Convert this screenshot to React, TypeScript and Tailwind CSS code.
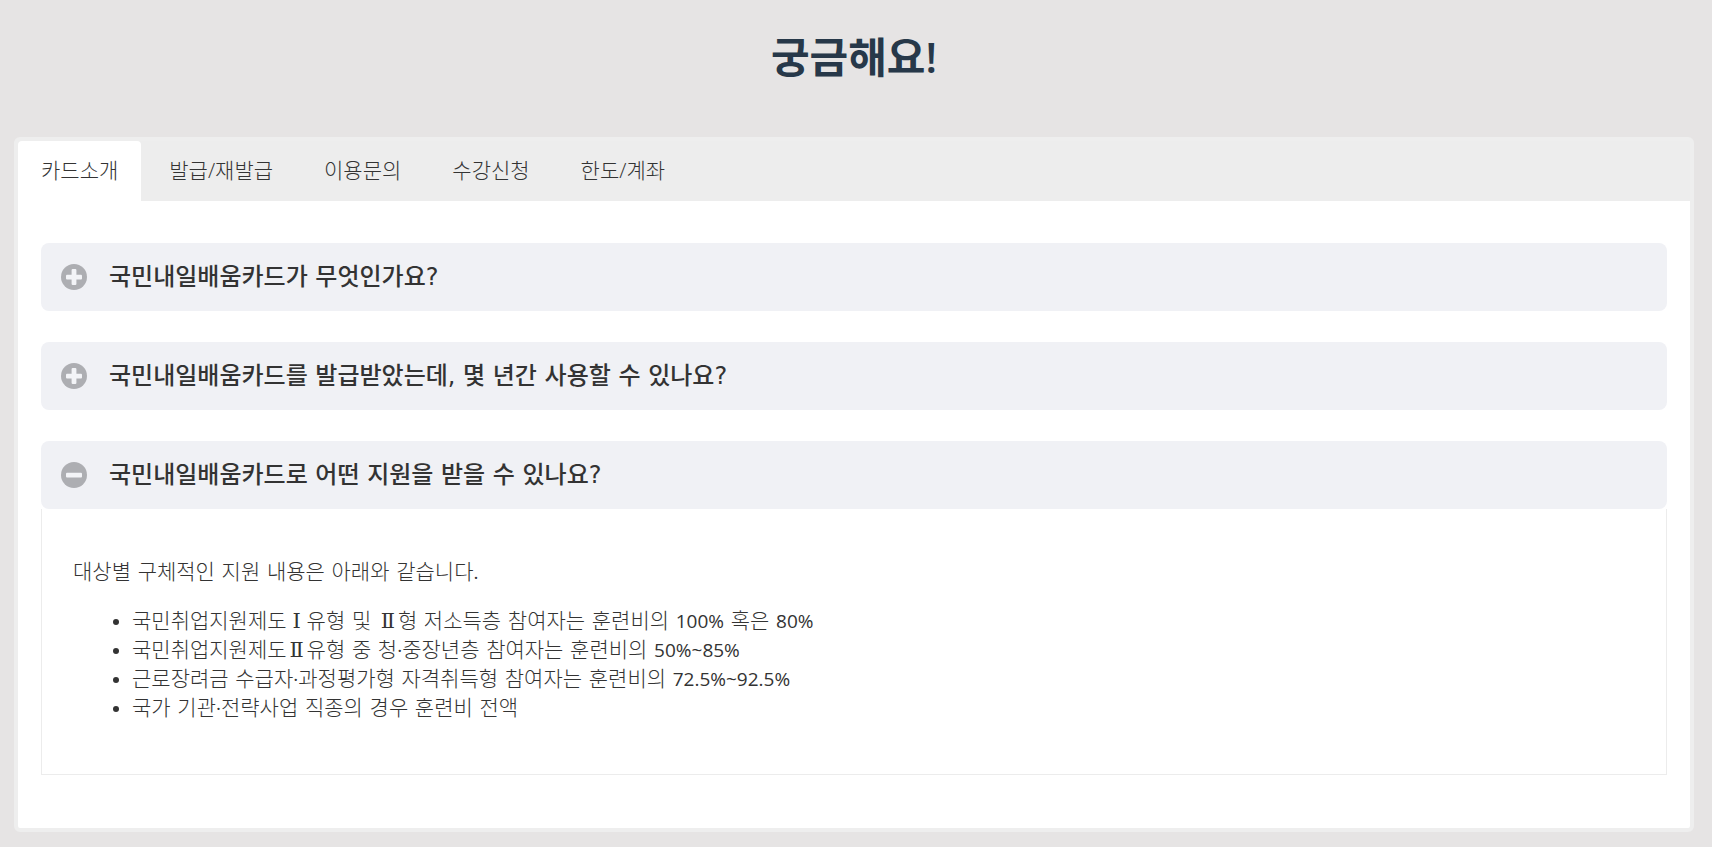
import { useState } from 'react';

const tabs = ['카드소개', '발급/재발급', '이용문의', '수강신청', '한도/계좌'];

const questions = [
  '국민내일배움카드가 무엇인가요?',
  '국민내일배움카드를 발급받았는데, 몇 년간 사용할 수 있나요?',
  '국민내일배움카드로 어떤 지원을 받을 수 있나요?',
];

function Num({ children }: { children: string }) {
  return <span className="font-['Open_Sans',sans-serif] text-[19px] leading-none font-normal">{children}</span>;
}

function Roman({ children }: { children: string }) {
  return (
    <span className="inline-block w-5 text-center font-['DejaVu_Serif',serif] text-[21px] leading-none font-normal">
      {children}
    </span>
  );
}

function ToggleIcon({ open }: { open: boolean }) {
  return (
    <svg className="size-[26px] shrink-0" viewBox="0 0 26 26" aria-hidden="true">
      <circle cx="13" cy="13" r="13" fill="#adaeb2" />
      <rect x="5" y="10.7" width="16" height="4.8" rx="1" fill="#f3f4f7" />
      {!open && <rect x="10.6" y="5.1" width="4.8" height="16" rx="1" fill="#f3f4f7" />}
    </svg>
  );
}

function SupportAnswer() {
  return (
    <div className="border border-t-0 border-[#ececec] px-[31px] pt-[49px] pb-[51px] font-['DejaVu_Sans','Noto_Sans_CJK_KR',sans-serif] text-[21px] leading-[29px] font-light">
      <p>
        대상별 구체적인 지원 내용은 아래와 같습니다<Num>.</Num>
      </p>
      <ul className="mt-5 list-disc pl-[59px]">
        <li>
          국민취업지원제도<Roman>Ⅰ</Roman>유형 및 <Roman>Ⅱ</Roman>형 저소득층 참여자는 훈련비의 <Num>100%</Num> 혹은{' '}
          <Num>80%</Num>
        </li>
        <li>
          국민취업지원제도<Roman>Ⅱ</Roman>유형 중 청<Num>·</Num>중장년층 참여자는 훈련비의 <Num>50%~85%</Num>
        </li>
        <li>
          근로장려금 수급자<Num>·</Num>과정평가형 자격취득형 참여자는 훈련비의 <Num>72.5%~92.5%</Num>
        </li>
        <li>
          국가 기관<Num>·</Num>전략사업 직종의 경우 훈련비 전액
        </li>
      </ul>
    </div>
  );
}

export default function App() {
  const [tab, setTab] = useState(0);
  const [open, setOpen] = useState(2);

  return (
    <main
      lang="ko"
      className="min-h-screen bg-[#e6e4e4] pt-[27px] pr-[18px] pb-[15px] pl-[14px] font-['Open_Sans','Noto_Sans_CJK_KR',sans-serif] text-[#333]"
    >
      <h1 className="text-center text-[42px] leading-[60px] font-semibold text-[#273849]">궁금해요!</h1>

      <section className="mt-[50px] rounded-md border-4 border-[#eeeeee] bg-white">
        <div role="tablist" className="flex flex-wrap gap-[5px] bg-[#ededed]">
          {tabs.map((name, i) => (
            <button
              key={name}
              type="button"
              role="tab"
              aria-selected={tab === i}
              onClick={() => setTab(i)}
              className={`h-[60px] rounded-t px-[23px] text-[21px] font-light ${tab === i ? 'bg-white' : ''}`}
            >
              {name}
            </button>
          ))}
        </div>

        <div className="flex flex-col gap-[31px] px-[23px] pt-[42px] pb-[53px]">
          {questions.map((question, i) => (
            <div key={question}>
              <h2>
                <button
                  type="button"
                  aria-expanded={open === i}
                  onClick={() => setOpen(open === i ? -1 : i)}
                  className="flex min-h-[68px] w-full items-center gap-[22px] rounded-lg bg-[#f0f1f5] px-5 text-left font-['DejaVu_Sans','Noto_Sans_CJK_KR',sans-serif] text-2xl font-medium"
                >
                  <ToggleIcon open={open === i} />
                  {question}
                </button>
              </h2>
              {open === i && i === 2 && <SupportAnswer />}
            </div>
          ))}
        </div>
      </section>
    </main>
  );
}
